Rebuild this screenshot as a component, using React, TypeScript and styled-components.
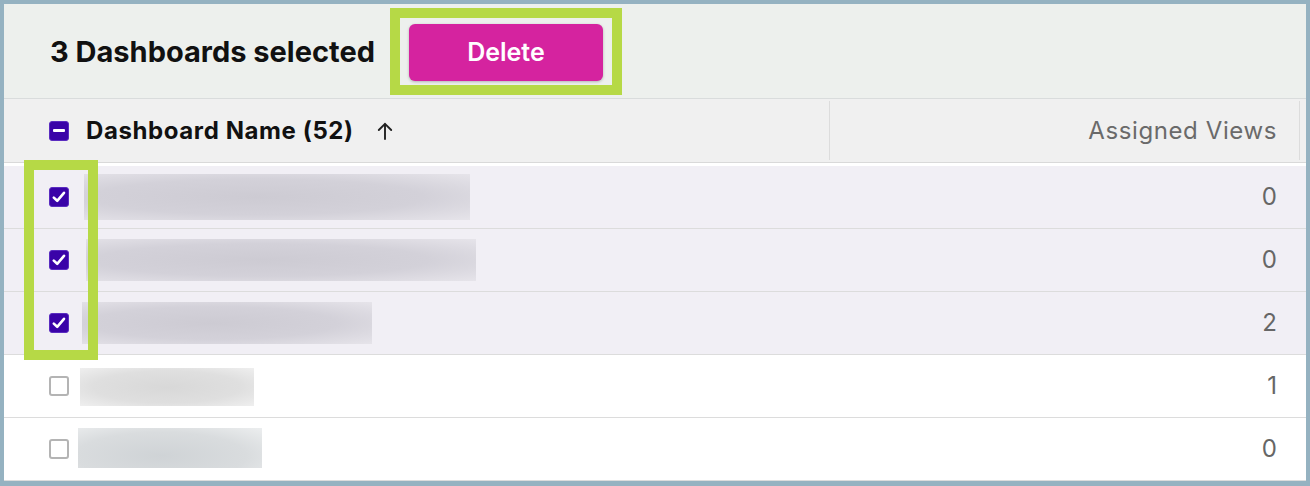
import styled, { createGlobalStyle } from 'styled-components'

const GlobalStyle = createGlobalStyle`
  html, body {
    margin: 0;
    padding: 0;
    background: #95b2c1;
  }
  body {
    font-family: Inter, "Noto Sans", "Liberation Sans", sans-serif;
  }
`

const Frame = styled.div`
  box-sizing: border-box;
  width: 1310px;
  height: 486px;
  padding: 4px 4px 5px 4px;
  background: #95b2c1;
`

const Panel = styled.div`
  position: relative;
  height: 100%;
  display: flex;
  flex-direction: column;
  background: #ffffff;
  box-shadow: inset 1px 0 0 #e3e6e8;
`

const Toolbar = styled.div`
  box-sizing: border-box;
  height: 95px;
  display: flex;
  align-items: center;
  padding-left: 46px;
  background: #edf0ed;
  border-bottom: 1px solid #d9dcdc;
`

const Title = styled.h2`
  margin: 0;
  font-size: 29px;
  font-weight: 700;
  color: #111111;
`

const DeleteFrame = styled.div`
  margin-left: 15px;
  padding: 6px 9px 4px 9px;
  border: 10px solid #b6d946;
`

const DeleteButton = styled.button`
  display: block;
  width: 194px;
  height: 57px;
  border: none;
  border-radius: 6px;
  background: #d5239f;
  color: #ffffff;
  font-family: inherit;
  font-size: 25px;
  font-weight: 600;
  box-shadow: 0 1px 3px rgba(0, 0, 0, 0.25);
  cursor: pointer;
`

const HeaderRow = styled.div`
  box-sizing: border-box;
  height: 64px;
  display: grid;
  grid-template-columns: 825px 470px 1fr;
  background: #f0f0f0;
  border-bottom: 1px solid #d9d9d9;
`

const HeaderCell = styled.div<{ $align?: 'left' | 'right'; $divider?: boolean }>`
  display: flex;
  align-items: center;
  justify-content: ${(p) => (p.$align === 'right' ? 'flex-end' : 'flex-start')};
  gap: 17px;
  padding: ${(p) => (p.$align === 'right' ? '0 22px 0 0' : '0 0 0 45px')};
  margin: 2px 0;
  border-left: ${(p) => (p.$divider ? '1px solid #dcdcdc' : 'none')};
`

const NameLabel = styled.span`
  font-size: 24px;
  font-weight: 700;
  letter-spacing: 0.6px;
  color: #111111;
`

const ViewsLabel = styled.span`
  font-size: 24px;
  font-weight: 400;
  letter-spacing: 0.6px;
  color: #6a6a6a;
`

const SortIcon = styled.svg`
  width: 20px;
  height: 20px;
  margin-left: 4px;
`

const Body = styled.div`
  padding-top: 3px;
  background: #ffffff;
`

const Row = styled.div<{ $selected?: boolean }>`
  box-sizing: border-box;
  height: 63px;
  display: flex;
  align-items: center;
  padding: 0 29px 0 45px;
  background: ${(p) => (p.$selected ? '#f1eff5' : '#ffffff')};
  border-bottom: 1px solid #dcdcdc;
`

const Box = styled.span<{ $on?: boolean }>`
  box-sizing: border-box;
  flex: none;
  width: 20px;
  height: 20px;
  display: flex;
  align-items: center;
  justify-content: center;
  border-radius: 3px;
  background: ${(p) => (p.$on ? '#3a03a8' : '#ffffff')};
  border: ${(p) => (p.$on ? '1px solid #5a2cc0' : '2px solid #b4b4b4')};
`

const Dash = styled.span`
  width: 12px;
  height: 3px;
  border-radius: 1px;
  background: #ffffff;
`

const Redacted = styled.div<{ $selected?: boolean; $cool?: boolean }>`
  flex: none;
  background: ${(p) =>
    p.$selected
      ? 'radial-gradient(ellipse at 45% 50%, #cdcbd3 0%, #d3d1d9 55%, #e6e4ea 100%)'
      : p.$cool
        ? 'radial-gradient(ellipse at 45% 70%, #cfd3d6 0%, #d9dcde 60%, #eceeef 100%)'
        : 'radial-gradient(ellipse at 50% 50%, #d8d8d8 0%, #dfdfdf 60%, #efefef 100%)'};
`

const Count = styled.span`
  margin-left: auto;
  margin-top: -2px;
  font-size: 24px;
  color: #666666;
`

const Annotation = styled.div`
  position: absolute;
  left: 20px;
  top: 156px;
  width: 74px;
  height: 200px;
  box-sizing: border-box;
  border: 10px solid #b6d946;
  pointer-events: none;
`

function CheckBox({ checked, indeterminate }: { checked?: boolean; indeterminate?: boolean }) {
  return (
    <Box $on={checked || indeterminate}>
      {indeterminate && <Dash />}
      {checked && !indeterminate && (
        <svg width="16" height="16" viewBox="0 0 16 16">
          <path
            d="M2.8 8.6 L6.2 11.8 L13 3.8"
            fill="none"
            stroke="#ffffff"
            strokeWidth="2.6"
            strokeLinecap="round"
            strokeLinejoin="round"
          />
        </svg>
      )}
    </Box>
  )
}

interface Dashboard {
  selected: boolean
  views: number
  blur: { w: number; h: number; ml: number; dy: number }
  cool?: boolean
}

const rows: Dashboard[] = [
  { selected: true, views: 0, blur: { w: 386, h: 46, ml: 15, dy: 0 } },
  { selected: true, views: 0, blur: { w: 390, h: 42, ml: 17, dy: 0 } },
  { selected: true, views: 2, blur: { w: 290, h: 42, ml: 13, dy: 0 } },
  { selected: false, views: 1, blur: { w: 174, h: 38, ml: 11, dy: 2 } },
  { selected: false, views: 0, blur: { w: 184, h: 40, ml: 9, dy: -2 }, cool: true },
]

export default function App() {
  return (
    <>
      <GlobalStyle />
      <Frame>
        <Panel>
          <Toolbar>
            <Title>3 Dashboards selected</Title>
            <DeleteFrame>
              <DeleteButton>Delete</DeleteButton>
            </DeleteFrame>
          </Toolbar>
          <HeaderRow>
            <HeaderCell>
              <CheckBox indeterminate />
              <NameLabel>Dashboard Name (52)</NameLabel>
              <SortIcon viewBox="0 0 20 20">
                <path
                  d="M10 18 V2.8 M3.8 9 L10 2.8 L16.2 9"
                  fill="none"
                  stroke="#222222"
                  strokeWidth="1.9"
                  strokeLinecap="round"
                  strokeLinejoin="round"
                />
              </SortIcon>
            </HeaderCell>
            <HeaderCell $align="right" $divider>
              <ViewsLabel>Assigned Views</ViewsLabel>
            </HeaderCell>
            <HeaderCell $divider />
          </HeaderRow>
          <Body>
            {rows.map((row, i) => (
              <Row key={i} $selected={row.selected}>
                <CheckBox checked={row.selected} />
                <Redacted
                  $selected={row.selected}
                  $cool={row.cool}
                  style={{
                    width: row.blur.w,
                    height: row.blur.h,
                    marginLeft: row.blur.ml,
                    marginTop: row.blur.dy,
                  }}
                />
                <Count>{row.views}</Count>
              </Row>
            ))}
          </Body>
          <Annotation />
        </Panel>
      </Frame>
    </>
  )
}
